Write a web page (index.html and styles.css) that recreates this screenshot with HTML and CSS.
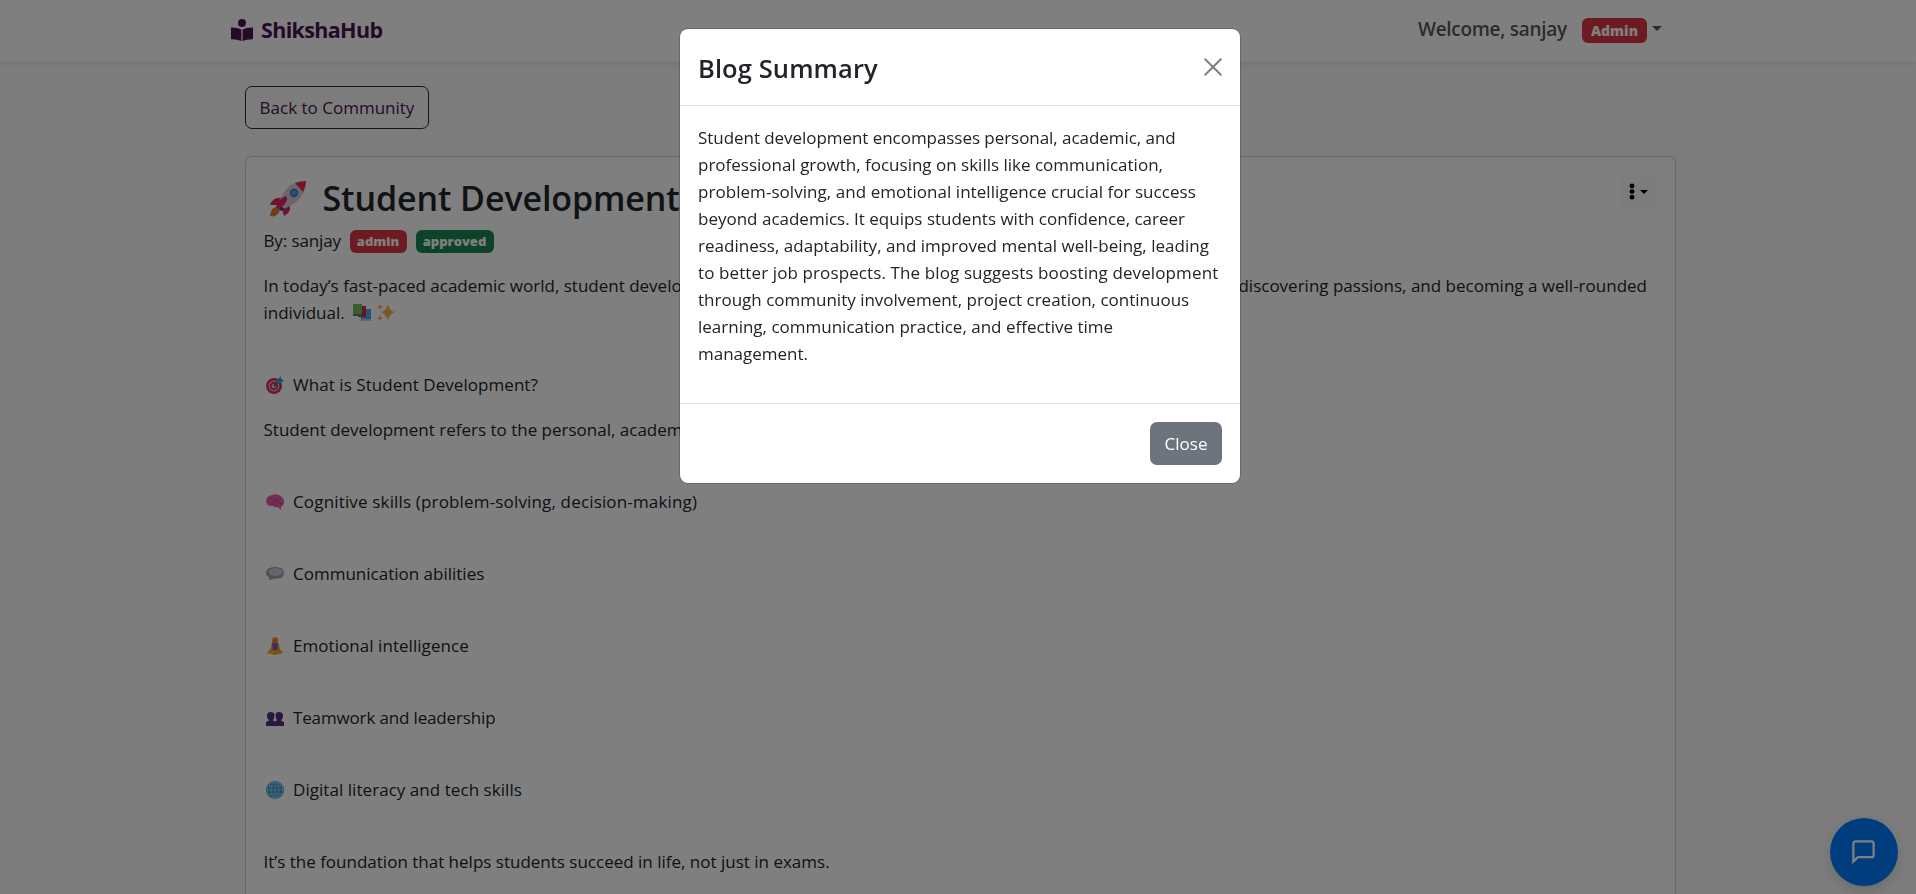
FILE: index.html
```html
<!DOCTYPE html>
<html lang="en">
<head>
<meta charset="utf-8">
<title>ShikshaHub</title>
<link rel="stylesheet" href="styles.css">
</head>
<body>
<nav class="navbar">
  <a class="brand">
    <svg class="brand-icon" viewBox="0 0 22 22"><circle cx="11" cy="4" r="4"/><path d="M0 8.6Q6 8.2 10.4 10.6V22Q6 20 0 20.2ZM22 8.6Q16 8.2 11.6 10.6V22Q16 20 22 20.2Z"/></svg>
    <span class="brand-name">ShikshaHub</span>
  </a>
  <div class="user">
    <span class="welcome">Welcome, sanjay</span>
    <span class="badge badge-user">Admin</span>
    <span class="caret"></span>
  </div>
</nav>
<main class="container">
  <a class="back"><span>Back to Community</span></a>
  <article class="card">
    <header class="card-head">
      <h2 class="title">
        <svg class="rocket" viewBox="0 0 36 36"><path d="M7 26Q1 26 0 35Q7 37 10 29Z" fill="#e87a22"/><path d="M13 17Q3 15 0 24L8 24ZM20 24Q21 32 14 35L12 28Z" fill="#df2564"/><path d="M30 1Q16 2 8 23L9 27L14 28Q33 20 35 6Z" fill="#d9cbdc"/><path d="M8 23L7 26L11 30L15 28Z" fill="#473b89"/><path d="M25 2Q30 0 36 0Q36 6 33 11Z" fill="#e72b49"/><path d="M6 26Q9 17 16 15Q20 20 9 28Z" fill="#df2564"/><circle cx="24" cy="12" r="4.2" fill="#496899"/><circle cx="24" cy="12" r="3" fill="#48a3ef"/></svg>
        <span>Student Development</span>
      </h2>
      <button class="menu"><svg class="dots" viewBox="0 0 6 18"><circle cx="3" cy="3" r="2.4"/><circle cx="3" cy="8.6" r="2.4"/><circle cx="3" cy="14.2" r="2.4"/></svg><span class="caret caret-small"></span></button>
    </header>
    <div class="byline"><span class="author">By: sanjay</span><span class="badge badge-admin">admin</span><span class="badge badge-approved">approved</span></div>
    <div class="intro">
      <div class="intro-line"><span>In today’s fast-paced academic world, student development</span><span>discovering passions, and becoming a well-rounded</span></div>
      <div class="intro-last"><span class="individual">individual.</span>
        <svg class="emoji" viewBox="0 0 18 18"><path d="M8 5H18V17H8Z" fill="#48a9e0"/><path d="M9 15H18V17H9Z" fill="#c5c9ee"/><path d="M5 2H13V13H5Z" fill="#cf2457"/><path d="M0 0H9V12H0Z" fill="#7bb959"/><path d="M0 10H9V12H0Z" fill="#478b68"/></svg>
        <svg class="emoji" viewBox="0 0 18 18" fill="#f2ae55"><path d="M11 0Q12 7 18 8Q12 10 11 17Q9 10 4 8Q9 7 11 0Z"/><path d="M3 0L4 2L6 3L4 4L3 6L2 4L0 3L2 2ZM3 11L4 13L6 14L4 15L3 17L2 15L0 14L2 13Z"/></svg>
      </div>
    </div>
    <div class="row"><svg class="emoji" viewBox="0 0 18 18"><circle cx="8" cy="10" r="6.7" fill="#dfc4d0" stroke="#d9305d" stroke-width="2.6"/><circle cx="8" cy="10" r="3.3" fill="none" stroke="#d9305d" stroke-width="2"/><path d="M8 10L13 5" stroke="#286cad" stroke-width="2"/><path d="M11 4L15 0V3L18 4L15 7H11Z" fill="#369be6"/></svg><span class="loose">What is Student Development?</span></div>
    <div class="para"><span>Student development refers to the personal, academic</span></div>
    <div class="row"><svg class="emoji" viewBox="0 0 18 18"><path d="M0 9Q0 3 6 2Q12 0 16 4Q19 7 17.500 12L15 13.500V17L12 14Q9 15 7 13Q1 13.500 0 9Z" fill="#e65aa5"/><path d="M3 6Q6 3 9 6T15 5M6 11Q9 6 12 9T17 9" fill="none" stroke="#c9459a"/></svg><span class="looser">Cognitive skills (problem-solving, decision-making)</span></div>
    <div class="row"><svg class="emoji" viewBox="0 0 18 18"><path d="M9 2Q18 2 18 8T9 13.5L3 15V12Q0 11 0 8Q0 2 9 2Z" fill="#a69ab9"/><ellipse cx="9.5" cy="7" rx="7" ry="4" fill="#cdc6d6"/></svg><span>Communication abilities</span></div>
    <div class="row"><svg class="emoji" viewBox="0 0 18 18"><path d="M6 4Q6 0 9 0Q13 0 12 5L14 12L17 16L9 18L1 16L5 11Z" fill="#eda323"/><path d="M6 6H12L11 14H7Z" fill="#8158b2"/><circle cx="9" cy="4" r="2" fill="#e37c20"/><path d="M2 16L9 13L16 16Z" fill="#f2b829"/></svg><span class="loose">Emotional intelligence</span></div>
    <div class="row"><svg class="emoji" viewBox="0 0 18 18" fill="#54307f"><path d="M0 17V13L3 11.500Q.5 9 1 6Q1.500 3 4.700 3Q8.500 3 8.500 6Q8.500 9 7 11.500L9 12.500L11 11.500Q9.500 9 9.500 6Q9.500 3 13.300 3Q16.500 3 17 6Q17.500 9 15 11.500L18 13V17Z"/></svg><span class="tight">Teamwork and leadership</span></div>
    <div class="row"><svg class="emoji" viewBox="0 0 18 18"><circle cx="9" cy="9" r="9" fill="#359bd0"/><g fill="none" stroke="#91cfea" stroke-width="1"><circle cx="9" cy="9" r="7.800"/><ellipse cx="9" cy="9" rx="4" ry="8"/><path d="M9 1V17M1 9H17M3 5H15M3 13H15"/></g></svg><span class="loose">Digital literacy and tech skills</span></div>
    <div class="row"><span>It’s the foundation that helps students succeed in life, not just in exams.</span></div>
  </article>
</main>
<button class="chat"><svg class="chat-icon" viewBox="0 0 24 24"><path d="M21 15a2 2 0 0 1-2 2H7l-4 4V5a2 2 0 0 1 2-2h14a2 2 0 0 1 2 2z"/></svg></button>
<div class="backdrop">
  <section class="modal">
    <header class="modal-head"><h5 class="modal-title">Blog Summary</h5><svg class="close-x" viewBox="0 0 18 18"><path d="M1.2 1.2L16.8 16.8M16.8 1.2L1.2 16.8"/></svg></header>
    <div class="modal-body"><p class="summary"><span class="snug">Student development encompasses personal, academic, and</span><br>professional growth, focusing on skills like communication,<br><span class="loose">problem-solving, and emotional intelligence crucial for success</span><br>beyond academics. It equips students with confidence, career<br><span class="slight">readiness, adaptability, and improved mental well-being, leading</span><br><span class="wide">to better job prospects. The blog suggests boosting development</span><br>through community involvement, project creation, continuous<br>learning, communication practice, and effective time<br>management.</p></div>
    <footer class="modal-foot"><button class="close-btn">Close</button></footer>
  </section>
</div>
</body>
</html>
```
FILE: styles.css
```css
* { box-sizing: border-box; }
html, body { height: 100%; overflow: hidden; }
body { margin: 0; display: flex; flex-direction: column; background: #f8f9fa; color: #212529; font: 17px/27px "Open Sans", "Noto Sans", sans-serif; white-space: nowrap; }
button { font: inherit; border: 0; padding: 0; }
h2, h5, p { margin: 0; }
.navbar { flex: none; height: 62px; padding: 0 254px 0 231px; display: flex; align-items: center; justify-content: space-between; background: #fff; box-shadow: 0 2px 4px rgba(0,0,0,.08); }
.brand { display: flex; align-items: center; gap: 8px; color: #4b1450; }
.brand-icon { width: 22px; height: 22px; fill: currentColor; margin-bottom: 2px; }
.brand-name { font-size: 21.5px; font-weight: 700; letter-spacing: -.65px; padding-bottom: 3px; }
.user { display: flex; align-items: center; padding-bottom: 2px; color: #595959; }
.welcome { width: 164px; padding-bottom: 2px; font-size: 19px; font-weight: 600; letter-spacing: -.3px; }
.badge { display: inline-flex; align-items: center; justify-content: center; border-radius: 6px; background: #dc3545; color: #fff; font-weight: 800; line-height: 1; }
.badge-user { width: 65px; height: 25px; font-size: 14px; margin-top: 1px; }
.caret { width: 10px; height: 5px; margin-left: 5px; margin-bottom: 3px; border: 5px solid transparent; border-top-color: currentColor; border-bottom: 0; }
.container { flex: 1; min-height: 0; display: flex; flex-direction: column; align-items: stretch; width: 1431px; margin: 24px 0 0 245px; }
.back { flex: none; display: flex; align-items: center; justify-content: center; width: 184px; height: 43px; border: 1px solid #4b1450; border-radius: 7px; color: #4b1450; }
.card { flex: 1; min-height: 0; margin-top: 27px; padding: 18px 18px 0 17.5px; background: #fff; border: 1px solid #d3d4d5; border-bottom: 0; border-radius: 7px 7px 0 0; }
.card-head { display: flex; justify-content: space-between; height: 43px; }
.title { display: flex; align-items: center; gap: 17px; padding: 4px 0 0 6px; font-size: 34px; font-weight: 600; line-height: 43px; letter-spacing: -.1px; }
.rocket { width: 36px; height: 36px; }
.menu { display: flex; align-items: center; justify-content: center; width: 38px; height: 34px; border-radius: 5px; background: #f8f9fa; color: #000; }
.dots { width: 6px; height: 18px; }
.caret-small { width: 8px; height: 4px; border-width: 4px; border-bottom: 0; margin-left: 5px; margin-bottom: 0; }
.byline { display: flex; align-items: center; height: 27px; margin-top: 9px; }
.author { width: 86px; letter-spacing: -.12px; }
.badge-admin, .badge-approved { height: 23px; font-size: 13px; margin-top: 1px; }
.badge-admin { width: 57px; }
.badge-approved { width: 78px; margin-left: 9px; background: #198754; }
.intro { margin-top: 18px; }
.intro-line { display: flex; justify-content: space-between; padding-right: 10px; }
.intro-last { display: flex; align-items: center; gap: 6px; height: 27px; }
.individual { width: 83px; }
.emoji { width: 18px; height: 18px; flex: none; overflow: visible; }
.row { display: flex; align-items: center; gap: 9px; height: 27px; margin-top: 45px; }
.row .emoji { margin-left: 2.5px; }
.para { height: 27px; margin-top: 18px; }
.loose { letter-spacing: .05px; }
.looser { letter-spacing: .16px; }
.wide { letter-spacing: .11px; }
.slight { letter-spacing: .02px; }
.snug { letter-spacing: -.05px; }
.tight { letter-spacing: -.15px; }
.chat { position: fixed; left: 1830px; top: 818px; width: 68px; height: 68px; border-radius: 50%; background: #007bff; display: grid; place-items: center; box-shadow: 0 4px 12px rgba(0,0,0,.15); }
.chat-icon { width: 27px; height: 27px; margin: 0 1px 2px 0; fill: none; stroke: #fff; stroke-width: 2; }
.backdrop { position: fixed; inset: 0; display: flex; justify-content: center; align-items: flex-start; padding: 28px 0 0 4px; background: rgba(0,0,0,.5); }
.modal { width: 562px; height: 456px; background: #fff; background-clip: padding-box; border: 1px solid rgba(0,0,0,.175); border-radius: 9px; }
.modal-head { display: flex; align-items: center; justify-content: space-between; height: 77px; padding: 0 18px; border-bottom: 1px solid #dee2e6; }
.modal-title { font-size: 25.5px; font-weight: 600; letter-spacing: .1px; padding-top: 2px; }
.close-x { width: 18px; height: 18px; fill: none; stroke: #7f7f7f; stroke-width: 2; stroke-linecap: round; margin-bottom: 1px; }
.modal-body { height: 298px; padding: 18px; border-bottom: 1px solid #dee2e6; }
.modal-foot { display: flex; justify-content: flex-end; padding: 18px; }
.close-btn { width: 72px; height: 43px; border-radius: 7px; background: #6c757d; color: #fff; }
```
